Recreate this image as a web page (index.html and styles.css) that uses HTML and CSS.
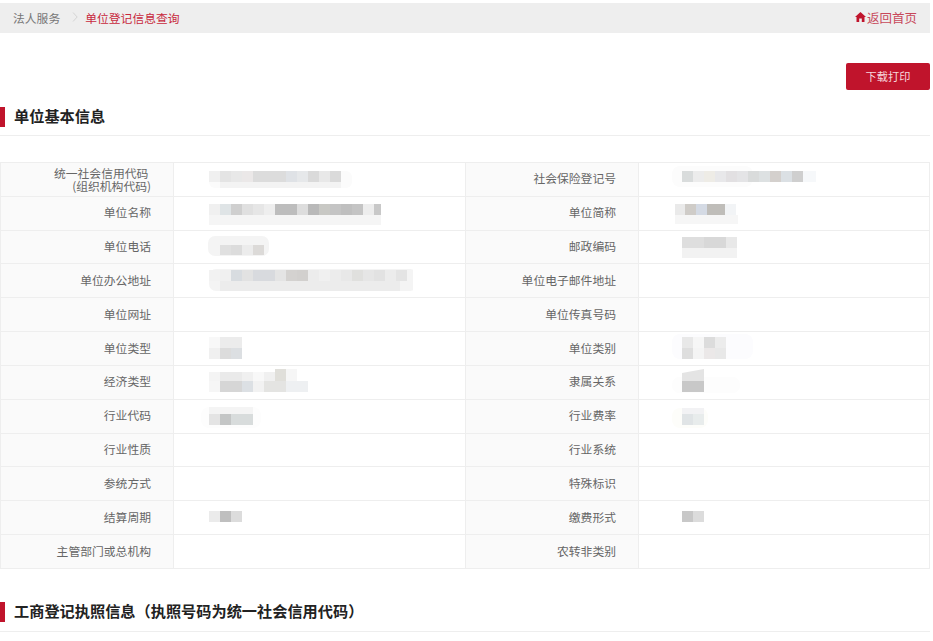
FILE: index.html
```html
<!DOCTYPE html>
<html lang="zh-CN">
<head>
<meta charset="utf-8">
<title>单位登记信息查询</title>
<link rel="stylesheet" href="styles.css">
</head>
<body>
<div class="page">
  <nav class="crumbs">
    <span class="crumb">法人服务</span>
    <svg class="chev" width="6" height="10" viewBox="0 0 6 10"><path d="M1 .5 5.2 5 1 9.500" fill="none" stroke="#d4d4d4" stroke-width="1"/></svg>
    <span class="crumb-current">单位登记信息查询</span>
    <a class="home"><svg width="11" height="10" viewBox="0 0 11 10"><path d="M5.500 0 11 5H9.500v5H6.800V6.600H4.200V10H1.500V5H0Z" fill="#c0142c"/></svg>返回首页</a>
  </nav>
  <div class="actions"><button class="print">下载打印</button></div>
  <h2 class="title">单位基本信息</h2>
  <div class="rule"></div>
  <div class="info">
    <div class="lbl lbl-two">统一社会信用代码&nbsp;<br>(组织机构代码)</div>
    <div class="val"><svg class="mosaic" width="240" height="33" viewBox="0 0 240 33">
      <rect x="36" y="8" width="143" height="17" rx="6" fill="#fbfbfb"/>
      <rect x="36" y="8" width="11" height="11" fill="#f0f0f0"/><rect x="47" y="8" width="11" height="11" fill="#e4e4e4"/><rect x="58" y="8" width="11" height="11" fill="#e8e8e8"/><rect x="69" y="8" width="11" height="11" fill="#ebe8e8"/><rect x="80" y="8" width="33" height="11" fill="#dcdcdc"/><rect x="113" y="8" width="11" height="11" fill="#dfe2e6"/><rect x="124" y="8" width="11" height="11" fill="#e6e8ea"/><rect x="135" y="8" width="11" height="11" fill="#dadada"/><rect x="146" y="8" width="11" height="11" fill="#e8e8e8"/><rect x="157" y="8" width="11" height="11" fill="#dadada"/>
      <rect x="47" y="19" width="121" height="6" fill="#f3f3f3"/>
    </svg></div>
    <div class="lbl">社会保险登记号</div>
    <div class="val"><svg class="mosaic" width="240" height="33" viewBox="0 0 240 33">
      <rect x="34" y="3" width="81" height="21" rx="8" fill="#fcfcfc"/>
      <rect x="44" y="8" width="11" height="11" fill="#d9dcdc"/><rect x="55" y="8" width="11" height="11" fill="#ececec"/><rect x="66" y="8" width="11" height="11" fill="#eeece6"/><rect x="77" y="8" width="11" height="11" fill="#e8e8ea"/><rect x="88" y="8" width="11" height="11" fill="#e2e0e2"/><rect x="99" y="8" width="11" height="11" fill="#e4e4e6"/><rect x="110" y="8" width="11" height="11" fill="#d9dbdb"/><rect x="121" y="8" width="11" height="11" fill="#dde1e2"/><rect x="132" y="8" width="11" height="11" fill="#d4d0cd"/><rect x="143" y="8" width="11" height="11" fill="#dbe0e4"/><rect x="154" y="8" width="11" height="11" fill="#cfcfcf"/><rect x="165" y="8" width="13" height="11" fill="#f6f8fa"/>
    </svg></div>

    <div class="lbl">单位名称</div>
    <div class="val"><svg class="mosaic" width="240" height="33" viewBox="0 0 240 33">
      <rect x="36" y="18" width="172" height="10" fill="#f5f5f5"/>
      <rect x="36" y="7" width="11" height="11" fill="#f0f0f0"/><rect x="47" y="7" width="11" height="11" fill="#dfe4e6"/><rect x="58" y="7" width="11" height="11" fill="#cfcfcf"/><rect x="69" y="7" width="11" height="11" fill="#e0e0e0"/><rect x="80" y="7" width="11" height="11" fill="#e6e6e6"/><rect x="91" y="7" width="11" height="11" fill="#eeeeee"/><rect x="102" y="7" width="22" height="11" fill="#bdbdbd"/><rect x="124" y="7" width="11" height="11" fill="#dddddd"/><rect x="135" y="7" width="11" height="11" fill="#b9b9b9"/><rect x="146" y="7" width="11" height="11" fill="#c8c8c4"/><rect x="157" y="7" width="11" height="11" fill="#c4c4c4"/><rect x="168" y="7" width="11" height="11" fill="#bfbfbf"/><rect x="179" y="7" width="11" height="11" fill="#c4c4c4"/><rect x="190" y="7" width="11" height="11" fill="#ededed"/><rect x="201" y="7" width="7" height="11" fill="#c8c8c8"/>
    </svg></div>
    <div class="lbl">单位简称</div>
    <div class="val"><svg class="mosaic" width="240" height="33" viewBox="0 0 240 33">
      <rect x="37" y="18" width="63" height="9" fill="#f6f6f6"/>
      <rect x="37" y="7" width="10" height="11" fill="#eaeaea"/><rect x="47" y="7" width="11" height="11" fill="#cfccc8"/><rect x="58" y="7" width="11" height="11" fill="#d4dae4"/><rect x="69" y="7" width="18" height="11" fill="#bfbdb9"/><rect x="87" y="7" width="11" height="11" fill="#f2f4f6"/>
    </svg></div>

    <div class="lbl">单位电话</div>
    <div class="val"><svg class="mosaic" width="240" height="33" viewBox="0 0 240 33">
      <rect x="35" y="5" width="61" height="20" rx="7" fill="#f4f4f4"/>
      <rect x="47" y="14" width="11" height="10" fill="#e0e0e0"/><rect x="58" y="14" width="11" height="10" fill="#dcdcdc"/><rect x="69" y="14" width="11" height="10" fill="#ececec"/><rect x="80" y="14" width="11" height="10" fill="#dcdad8"/>
    </svg></div>
    <div class="lbl">邮政编码</div>
    <div class="val"><svg class="mosaic" width="240" height="33" viewBox="0 0 240 33">
      <rect x="44" y="17" width="55" height="10" fill="#f2f2f2"/>
      <rect x="44" y="6" width="22" height="11" fill="#dedede"/><rect x="66" y="6" width="22" height="11" fill="#d8d8d8"/><rect x="88" y="6" width="11" height="11" fill="#e8e8e8"/>
    </svg></div>

    <div class="lbl">单位办公地址</div>
    <div class="val"><svg class="mosaic" width="240" height="33" viewBox="0 0 240 33">
      <rect x="36" y="5" width="208" height="22" rx="7" fill="#f4f4f4"/>
      <rect x="47" y="17" width="180" height="10" fill="#ececec"/>
      <rect x="36" y="6" width="11" height="11" fill="#f2f2f2"/><rect x="47" y="6" width="11" height="11" fill="#f0f0f0"/><rect x="58" y="6" width="11" height="11" fill="#d8dce0"/><rect x="69" y="6" width="11" height="11" fill="#e2e2e2"/><rect x="80" y="6" width="22" height="11" fill="#d8dade"/><rect x="102" y="6" width="11" height="11" fill="#e4e4e4"/><rect x="113" y="6" width="11" height="11" fill="#d4d2d0"/><rect x="124" y="6" width="11" height="11" fill="#d2d0ce"/><rect x="135" y="6" width="11" height="11" fill="#ececec"/><rect x="146" y="6" width="11" height="11" fill="#f0f0f0"/><rect x="157" y="6" width="11" height="11" fill="#ececec"/><rect x="168" y="6" width="11" height="11" fill="#e8e8e8"/><rect x="179" y="6" width="11" height="11" fill="#e0e0de"/><rect x="190" y="6" width="11" height="11" fill="#e6e6e6"/><rect x="201" y="6" width="11" height="11" fill="#e2e2e2"/><rect x="212" y="6" width="11" height="11" fill="#ececec"/><rect x="223" y="6" width="11" height="11" fill="#e4e4e4"/>
    </svg></div>
    <div class="lbl">单位电子邮件地址</div>
    <div class="val"></div>

    <div class="lbl">单位网址</div>
    <div class="val"></div>
    <div class="lbl">单位传真号码</div>
    <div class="val"></div>

    <div class="lbl">单位类型</div>
    <div class="val"><svg class="mosaic" width="240" height="33" viewBox="0 0 240 33">
      <rect x="36" y="5" width="11" height="11" fill="#f8f8f8"/><rect x="47" y="5" width="22" height="11" fill="#ececec"/>
      <rect x="36" y="16" width="11" height="11" fill="#f0f0f0"/><rect x="47" y="16" width="11" height="11" fill="#dcdcdc"/><rect x="58" y="16" width="11" height="11" fill="#dcdfe2"/>
    </svg></div>
    <div class="lbl">单位类别</div>
    <div class="val"><svg class="mosaic" width="240" height="33" viewBox="0 0 240 33">
      <rect x="34" y="2" width="81" height="25" rx="8" fill="#fcfcfe"/>
      <rect x="44" y="5" width="11" height="11" fill="#e8e8e8"/><rect x="55" y="5" width="11" height="11" fill="#f6f6f6"/><rect x="66" y="5" width="11" height="11" fill="#dcdcdc"/><rect x="77" y="5" width="11" height="11" fill="#ececec"/>
      <rect x="44" y="16" width="11" height="11" fill="#dedede"/><rect x="55" y="16" width="11" height="11" fill="#f4f4f4"/><rect x="66" y="16" width="11" height="11" fill="#ebe8e8"/><rect x="77" y="16" width="11" height="11" fill="#e8e8e8"/>
    </svg></div>

    <div class="lbl">经济类型</div>
    <div class="val"><svg class="mosaic" width="240" height="33" viewBox="0 0 240 33">
      <rect x="36" y="6" width="11" height="9" fill="#f4f4f4"/><rect x="47" y="6" width="22" height="9" fill="#eaeaea"/><rect x="69" y="6" width="11" height="9" fill="#f0f0f0"/><rect x="80" y="6" width="11" height="9" fill="#f8f8f8"/><rect x="91" y="6" width="11" height="9" fill="#f0f0f0"/><rect x="102" y="3" width="11" height="12" fill="#e0dfda"/><rect x="113" y="3" width="11" height="12" fill="#f6f6f6"/>
      <rect x="36" y="15" width="11" height="11" fill="#f6f6f6"/><rect x="47" y="15" width="33" height="11" fill="#d6d6d6"/><rect x="69" y="15" width="11" height="11" fill="#dce0e4"/><rect x="80" y="15" width="11" height="11" fill="#f2f2f2"/><rect x="91" y="15" width="22" height="11" fill="#e4e4e2"/><rect x="113" y="15" width="22" height="11" fill="#eef0f2"/>
    </svg></div>
    <div class="lbl">隶属关系</div>
    <div class="val"><svg class="mosaic" width="240" height="33" viewBox="0 0 240 33">
      <rect x="34" y="11" width="68" height="16" rx="7" fill="#fdfdfd"/>
      <path d="M44 15V7L66 3V15Z" fill="#e4e4e4"/><rect x="44" y="15" width="22" height="11" fill="#c8c8c8"/>
    </svg></div>

    <div class="lbl">行业代码</div>
    <div class="val"><svg class="mosaic" width="240" height="33" viewBox="0 0 240 33">
      <rect x="28" y="7" width="60" height="21" rx="8" fill="#fdfdfd"/>
      <rect x="36" y="7" width="44" height="7" fill="#f4f4f4"/>
      <rect x="36" y="14" width="11" height="11" fill="#e4e4e4"/><rect x="47" y="14" width="11" height="11" fill="#c4c6c6"/><rect x="58" y="14" width="22" height="11" fill="#d8dcdc"/>
    </svg></div>
    <div class="lbl">行业费率</div>
    <div class="val"><svg class="mosaic" width="240" height="33" viewBox="0 0 240 33">
      <rect x="34" y="8" width="36" height="20" rx="8" fill="#fdfdfa"/>
      <rect x="44" y="8" width="22" height="6" fill="#f2f2f4"/>
      <rect x="44" y="14" width="11" height="11" fill="#e0e4e6"/><rect x="55" y="14" width="11" height="11" fill="#e8ecec"/>
    </svg></div>

    <div class="lbl">行业性质</div>
    <div class="val"></div>
    <div class="lbl">行业系统</div>
    <div class="val"></div>

    <div class="lbl">参统方式</div>
    <div class="val"></div>
    <div class="lbl">特殊标识</div>
    <div class="val"></div>

    <div class="lbl">结算周期</div>
    <div class="val"><svg class="mosaic" width="240" height="33" viewBox="0 0 240 33">
      <rect x="36" y="10" width="11" height="11" fill="#ebebeb"/><rect x="47" y="10" width="11" height="11" fill="#bfbfbf"/><rect x="58" y="10" width="11" height="11" fill="#dcdcdc"/>
    </svg></div>
    <div class="lbl">缴费形式</div>
    <div class="val"><svg class="mosaic" width="240" height="33" viewBox="0 0 240 33">
      <rect x="44" y="10" width="11" height="11" fill="#c8c8c8"/><rect x="55" y="10" width="11" height="11" fill="#dcdcdc"/>
    </svg></div>

    <div class="lbl">主管部门或总机构</div>
    <div class="val"></div>
    <div class="lbl">农转非类别</div>
    <div class="val"></div>
  </div>
  <h2 class="title title-next">工商登记执照信息（执照号码为统一社会信用代码）</h2>
  <div class="rule rule-next"></div>
</div>
</body>
</html>
```

FILE: styles.css
```css
html, body {
  margin: 0;
  padding: 0;
  background: #fff;
}

body {
  font-family: "Noto Sans CJK SC", "Liberation Sans", sans-serif;
  overflow: hidden;
}

.page {
  width: 930px;
  padding-top: 3px;
}

.crumbs {
  display: flex;
  align-items: center;
  box-sizing: border-box;
  height: 30px;
  padding: 0 13px 2px;
  background: #eeeeee;
  font-size: 11.8px;
}

.crumb {
  color: #777;
}

.chev {
  margin: 0 7px 0 12px;
}

.crumb-current {
  color: #c8283c;
}

.home {
  display: flex;
  align-items: center;
  margin-left: auto;
  color: #c8485a;
  font-size: 12.5px;
}

.home svg {
  margin-right: 1px;
}

.actions {
  display: flex;
  justify-content: flex-end;
  margin-top: 30px;
}

.print {
  width: 84px;
  height: 27px;
  padding: 0 0 2px;
  border: 0;
  border-radius: 2px;
  background: #c0142c;
  color: #f6d8dc;
  font: 11.2px "Noto Sans CJK SC", sans-serif;
}

.title {
  margin: 17px 0 0;
  height: 20px;
  padding-left: 9px;
  border-left: 5px solid #c0142c;
  color: #222;
  font-size: 15.200px;
  font-weight: 700;
  line-height: 17px;
}

.title-next {
  margin-top: 33px;
}

.rule {
  height: 1px;
  margin-top: 8px;
  background: #eeeeee;
}

.rule-next {
  margin-top: 9px;
}

.info {
  display: grid;
  grid-template-columns: 173px 292px 173px 291px;
  grid-auto-rows: 33.830px;
  margin-top: 26px;
  border-top: 1px solid #eeeeee;
  border-left: 1px solid #eeeeee;
  font-size: 11.800px;
}

.lbl,
.val {
  box-sizing: border-box;
  border-right: 1px solid #eeeeee;
  border-bottom: 1px solid #eeeeee;
}

.lbl {
  display: flex;
  align-items: center;
  justify-content: flex-end;
  padding: 0 22px 3px 0;
  background: #fafafa;
  color: #666;
  text-align: right;
}

.lbl-two {
  padding-bottom: 1px;
  line-height: 13px;
}

.mosaic {
  display: block;
  margin-left: -1px;
  filter: blur(0.5px);
}
```
